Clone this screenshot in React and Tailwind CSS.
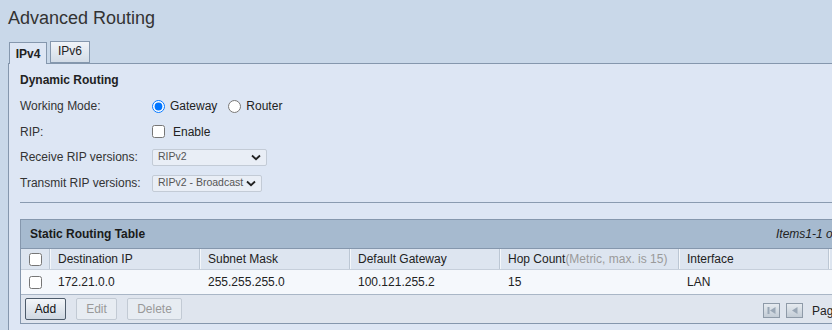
import React from "react";

function Chevron() {
  return (
    <svg width="10" height="7" viewBox="0 0 10 7" className="shrink-0">
      <path d="M1 1.5 L5 5.2 L9 1.5" fill="none" stroke="#222" strokeWidth="1.8" />
    </svg>
  );
}

function FakeSelect({ value, width }) {
  return (
    <div
      className={`flex items-center justify-between h-[17px] pl-[5px] pr-[5px] border border-[#c3cbd6] bg-[#e9eef6] text-[10.5px] text-[#555] rounded-[2px] ${width}`}
    >
      <span>{value}</span>
      <Chevron />
    </div>
  );
}

function Row({ label, children, h }) {
  return (
    <div className={`flex items-center ${h}`}>
      <div className="w-[132px] shrink-0 text-[#333]">{label}</div>
      <div className="flex items-center">{children}</div>
    </div>
  );
}

function PagerBtn({ first }) {
  return (
    <div className="w-[17px] h-[15px] shrink-0 border border-[#8e9aa8] bg-gradient-to-b from-[#e6ebf0] to-[#c3ccd6] flex items-center justify-center">
      <svg width="11" height="9" viewBox="0 0 11 9">
        {first && <rect x="1.5" y="1" width="2" height="7" fill="#9aa7b6" />}
        <path d={first ? "M9.5 1 L4 4.5 L9.5 8 Z" : "M8.5 1 L3 4.5 L8.5 8 Z"} fill="#9aa7b6" />
      </svg>
    </div>
  );
}

export default function App() {
  const cols = [
    { w: "w-[150px]", h: "Destination IP", d: "172.21.0.0" },
    { w: "w-[150px]", h: "Subnet Mask", d: "255.255.255.0" },
    { w: "w-[150px]", h: "Default Gateway", d: "100.121.255.2" },
    {
      w: "w-[179px]",
      h: (
        <>
          Hop Count<span className="text-[#9a9a9a]">(Metric, max. is 15)</span>
        </>
      ),
      d: "15",
    },
    { w: "w-[150px]", h: "Interface", d: "LAN" },
    { w: "w-[120px]", h: "", d: "" },
  ];

  return (
    <div className="w-[832px] h-[330px] overflow-hidden bg-[#c9d8e9] text-[12px] text-[#222] font-['Liberation_Sans',Arial,sans-serif]">
      <div className="pl-2 pt-[7px] h-[41px] text-[18px] leading-[22px] text-[#333]">
        Advanced Routing
      </div>

      <div className="relative z-10 flex items-start pl-[9px] gap-[3px] h-[23px] -mb-px">
        <div className="mt-[1px] h-[22px] w-[38px] border border-b-0 border-[#8597ad] bg-[#dde6f4] font-bold flex items-center justify-center text-[#222]">
          IPv4
        </div>
        <div className="h-[22px] w-[40px] border border-[#8597ad] bg-gradient-to-b from-[#f0f4f9] to-[#d3dce7] flex items-center justify-center pb-[3px] text-[#222]">
          IPv6
        </div>
      </div>

      <div className="ml-2 h-[300px] border-t border-l border-[#8597ad] bg-[#dde6f4] pl-[11px]">
        <div className="pt-[9px] font-bold leading-[14px] text-[#222]">Dynamic Routing</div>
        <div className="mt-[6px]">
          <Row label="Working Mode:" h="h-[26px]">
            <input type="radio" name="mode" defaultChecked className="m-0 w-[13px] h-[13px]" />
            <span className="ml-[5px] text-[#222]">Gateway</span>
            <input type="radio" name="mode" className="m-0 ml-[11px] w-[13px] h-[13px]" />
            <span className="ml-[5px] text-[#222]">Router</span>
          </Row>
          <Row label="RIP:" h="h-[25px]">
            <input type="checkbox" className="m-0 w-[13px] h-[13px]" />
            <span className="ml-[8px] text-[#222]">Enable</span>
          </Row>
          <Row label="Receive RIP versions:" h="h-[26px]">
            <FakeSelect value="RIPv2" width="w-[115px]" />
          </Row>
          <Row label="Transmit RIP versions:" h="h-[26px]">
            <FakeSelect value="RIPv2 - Broadcast" width="w-[110px]" />
          </Row>
        </div>

        <div className="mt-[6px] border-t border-[#8a9bb0]" />

        <div className="mt-[16px] w-[960px] border border-[#8597ad]">
          <div className="h-[28px] bg-[#a6bacf] flex items-center pl-[9px]">
            <div className="w-[746px] shrink-0 font-bold text-[#1a1a1a]">Static Routing Table</div>
            <div className="italic text-[#222] whitespace-nowrap">Items1-1 of 1</div>
          </div>
          <div className="h-[21px] flex bg-[#dde5f0] border-t border-[#8597ad]">
            <div className="w-[29px] shrink-0 flex items-center justify-center border-r border-[#bcc7d4] shadow-[1px_0_0_#f4f7fb]">
              <input type="checkbox" className="m-0 w-[13px] h-[13px]" />
            </div>
            {cols.map((c, i) => (
              <div
                key={i}
                className={`${c.w} shrink-0 flex items-center pl-[8px] border-r border-[#bcc7d4] shadow-[1px_0_0_#f4f7fb] whitespace-nowrap`}
              >
                {c.h}
              </div>
            ))}
          </div>
          <div className="h-[25px] flex bg-[#f5f8fc] border-t border-[#c6cfdb]">
            <div className="w-[29px] shrink-0 flex items-center justify-center">
              <input type="checkbox" className="m-0 w-[13px] h-[13px]" />
            </div>
            {cols.map((c, i) => (
              <div key={i} className={`${c.w} shrink-0 flex items-center pl-[8px]`}>
                {c.d}
              </div>
            ))}
          </div>
          <div className="h-[29px] flex items-center bg-[#dfe5ee] border-t border-[#a9b6c6] pl-[4px]">
            <div className="w-[41px] h-[22px] shrink-0 border border-[#4d5b6a] rounded-[2px] bg-gradient-to-b from-[#f3f6f9] to-[#cfd8e2] flex items-center justify-center text-[#111]">
              Add
            </div>
            <div className="ml-[10px] w-[41px] h-[22px] shrink-0 border border-[#c2cad4] rounded-[2px] bg-[#e7ecf2] flex items-center justify-center text-[#999]">
              Edit
            </div>
            <div className="ml-[10px] w-[55px] h-[22px] shrink-0 border border-[#c2cad4] rounded-[2px] bg-[#e7ecf2] flex items-center justify-center text-[#999]">
              Delete
            </div>
            <div className="ml-[581px] flex items-center gap-[6px] mt-[3px]">
              <PagerBtn first />
              <PagerBtn />
              <span className="ml-[3px] text-[#222] whitespace-nowrap">Page 1 of 1</span>
            </div>
          </div>
        </div>
      </div>
    </div>
  );
}
